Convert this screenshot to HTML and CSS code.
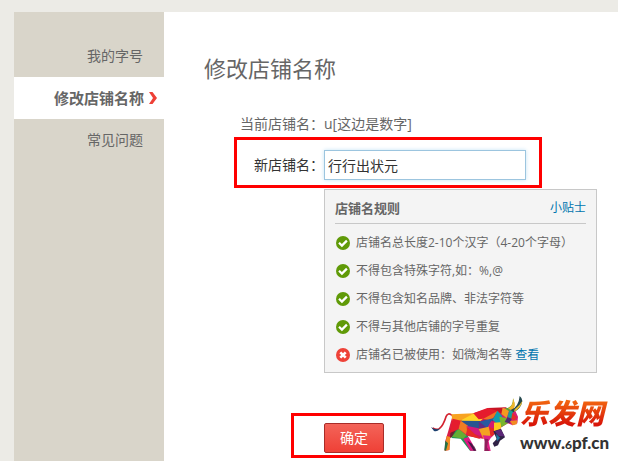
FILE: index.html
```html
<!DOCTYPE html>
<html lang="zh-CN">
<head>
    <meta charset="UTF-8">
    <meta name="viewport" content="width=device-width, initial-scale=1.0">
    <title>修改店铺名称</title>
    <link rel="stylesheet" href="styles.css">
</head>
<body>
    <svg class="sprite" aria-hidden="true">
        <symbol id="ok" viewBox="0 0 14 14">
            <circle cx="7" cy="7" r="7" fill="#609a08"/>
            <path d="M3 6.8l2.9 2.8 5-5" fill="none" stroke="#fff" stroke-width="2.2"/>
        </symbol>
        <symbol id="no" viewBox="0 0 14 14">
            <circle cx="7" cy="7" r="7" fill="#ee4238"/>
            <path d="M4.3 4.3l5.4 5.4M9.7 4.3l-5.4 5.4" fill="none" stroke="#fff" stroke-width="2.6"/>
        </symbol>
    </svg>
    <div class="page">
        <nav class="sidebar">
            <a href="#">我的字号</a>
            <a href="#" class="active">修改店铺名称<svg class="arrow" viewBox="0 0 8 12"><path d="M0 0h3.5L8 6l-4.5 6H0l4-6z" fill="#ee4036"/></svg></a>
            <a href="#">常见问题</a>
        </nav>
        <main class="main">
            <h1>修改店铺名称</h1>
            <form>
                <div class="row">
                    <span class="label">当前店铺名：</span>
                    <span>u[这边是数字]</span>
                </div>
                <div class="row boxed">
                    <label class="label" for="shopName">新店铺名：</label>
                    <input type="text" id="shopName" value="行行出状元">
                </div>
                <section class="tips">
                    <div class="tips-head">
                        <h2>店铺名规则</h2>
                        <a href="#">小贴士</a>
                    </div>
                    <ul>
                        <li><svg class="icon"><use href="#ok"/></svg><span>店铺名总长度2-10个汉字（4-20个字母）</span></li>
                        <li><svg class="icon"><use href="#ok"/></svg><span>不得包含特殊字符,如：%,@</span></li>
                        <li><svg class="icon"><use href="#ok"/></svg><span>不得包含知名品牌、非法字符等</span></li>
                        <li><svg class="icon"><use href="#ok"/></svg><span>不得与其他店铺的字号重复</span></li>
                        <li><svg class="icon"><use href="#no"/></svg><span>店铺名已被使用：如微淘名等 <a href="#">查看</a></span></li>
                    </ul>
                </section>
                <div class="actions">
                    <div class="submit-box">
                        <button type="submit">确定</button>
                    </div>
                    <div class="logo">
                        <svg class="bull" viewBox="12 27 288 171" aria-hidden="true">
                            <!-- tail -->
                            <path d="M78 88Q66 78 60 92Q52 118 40 128Q32 133 20 126" fill="none" stroke="#d3222f" stroke-width="5"/>
                            <path d="M42 126Q32 135 15 123L24 135Q36 138 42 126z" fill="#1d416f"/>
                            <!-- hind legs -->
                            <path d="M78 95L102 108L96 134L72 156L70 192L56 194L58 164L66 138z" fill="#d91e48"/>
                            <path d="M74 128L96 120L84 150L72 156z" fill="#6d2430"/>
                            <path d="M62 150L73 153L70 192L56 194z" fill="#f28c22"/>
                            <path d="M58 164L66 172L60 194L55 193z" fill="#256f45"/>
                            <path d="M98 118L132 136L122 164L146 182L151 194L132 194L104 158L76 156z" fill="#1d9857"/>
                            <path d="M100 126L130 138L112 158L78 152z" fill="#64ae34"/>
                            <path d="M112 158L128 153L151 194H133z" fill="#df1682"/>
                            <path d="M124 164L138 173L150 194H143z" fill="#421a45"/>
                            <!-- body -->
                            <path d="M104 104L142 82L190 66L228 66L240 100L222 130L198 152L170 158L124 150L98 128z" fill="#d51b50"/>
                            <path d="M76 85L144 82L108 105L80 108z" fill="#f8a321"/>
                            <path d="M80 98L106 104L98 130L70 142z" fill="#e51d2e"/>
                            <path d="M108 101L144 82L156 96L176 94L160 108L108 106z" fill="#ffd327"/>
                            <path d="M104 104L164 105L158 129L122 122z" fill="#27558f"/>
                            <path d="M104 104L126 119L120 145L98 128z" fill="#ef7d23"/>
                            <path d="M120 119L158 127L170 152L146 144z" fill="#d31a7b"/>
                            <path d="M122 122L146 144L164 160L124 148z" fill="#e72a25"/>
                            <path d="M158 108L208 92L190 130L160 130z" fill="#612b83"/>
                            <path d="M142 82L184 66L228 72L212 94L158 100z" fill="#e51b2d"/>
                            <path d="M184 66L242 64L228 84L214 74z" fill="#c61424"/>
                            <path d="M172 98L216 74L196 104z" fill="#f07422"/>
                            <path d="M160 107L204 96L184 126z" fill="#275aa0"/>
                            <path d="M214 74L232 94L222 124L200 101z" fill="#119cae"/>
                            <path d="M196 104L224 118L196 146L180 132z" fill="#d51b72"/>
                            <path d="M158 129L188 122L196 150L172 158z" fill="#f4a321"/>
                            <path d="M190 124L214 130L194 157z" fill="#e52a26"/>
                            <path d="M204 110L232 108L218 140L204 142z" fill="#ffcb1e"/>
                            <!-- front legs -->
                            <path d="M170 148L198 150L188 166L194 195H176L181 176z" fill="#df2086"/>
                            <path d="M176 158L187 159L183 184L190 195H175z" fill="#8f215b"/>
                            <path d="M202 136L225 128L237 154L222 164L216 178L205 182L200 172L212 159z" fill="#302146"/>
                            <path d="M206 136L224 130L236 151L218 150z" fill="#5c2779"/>
                            <path d="M210 143L222 155L213 166z" fill="#1b77a0"/>
                            <!-- head -->
                            <path d="M230 65L265 68L276 92L274 112L260 118L246 112L226 124z" fill="#d71c73"/>
                            <path d="M230 65L250 72L242 96L226 84z" fill="#f39b20"/>
                            <path d="M220 92L242 96L248 110L226 124z" fill="#77b42e"/>
                            <path d="M250 72L262 74L258 98L244 94z" fill="#1a9e94"/>
                            <path d="M244 94L258 98L250 112L236 108z" fill="#522b74"/>
                            <path d="M259 80L272 94L264 104L256 98z" fill="#e52d28"/>
                            <path d="M252 105L274 103L272 115L260 118z" fill="#f28b23"/>
                            <!-- horns -->
                            <path d="M236 67Q262 66 261 37Q274 70 248 75z" fill="#55a43a"/>
                            <path d="M246 67Q262 61 261 37Q274 66 256 73z" fill="#f0b52b"/>
                            <path d="M254 72Q278 64 281 30Q288 35 289 45Q285 70 262 79z" fill="#24484d"/>
                            <path d="M266 70Q282 57 289 45Q286 66 264 77z" fill="#e7bb2c"/>
                        </svg>
                        <div class="brand">
                            <span class="brand-name">乐发网</span>
                            <span class="brand-url">www.<small>6</small>pf.cn</span>
                        </div>
                    </div>
                </div>
            </form>
        </main>
    </div>
</body>
</html>
```
FILE: styles.css
```css
:root {
    --text: #666;
    --link: #0074ae;
    --mark: #ff0000;
}

* {
    box-sizing: border-box;
}

body {
    margin: 0;
    padding: 12px 0 0 14px;
    background-color: #ecebe6;
    color: var(--text);
    font-family: "Open Sans", "Noto Sans CJK SC", sans-serif;
    font-size: 14px;
    line-height: 20px;
}

a {
    color: var(--link);
    text-decoration: none;
}

.sprite {
    display: none;
}

.page {
    display: flex;
    min-height: calc(100vh - 12px);
}

.sidebar {
    flex: 0 0 150px;
    padding-top: 23px;
    background-color: #d9d5ca;
}

.sidebar a {
    display: flex;
    justify-content: flex-end;
    align-items: center;
    height: 42px;
    padding-right: 21px;
    color: var(--text);
}

.sidebar .active {
    padding-right: 7px;
    background-color: #fff;
    font-size: 15px;
    font-weight: bold;
}

.arrow {
    width: 8px;
    height: 12px;
    margin-left: 5px;
}

.main {
    flex: 1;
    min-width: 0;
    background-color: #fff;
}

h1 {
    margin: 40px 0 0 40px;
    font-size: 22px;
    font-weight: normal;
    line-height: 32px;
}

form {
    padding: 30px 0 0 70px;
}

.row {
    display: flex;
    align-items: center;
    padding-left: 3px;
}

.label {
    flex: 0 0 87px;
    text-align: right;
    white-space: nowrap;
}

.boxed {
    width: 308px;
    margin-top: 3px;
    padding: 10px 0 5px;
    border: 3px solid var(--mark);
    color: #333;
}

input {
    width: 202px;
    height: 30px;
    padding: 0 3px;
    border: 1px solid #9cc5df;
    box-shadow: 0 0 4px #c5e3f5;
    color: #333;
    font: inherit;
    outline: none;
}

.tips {
    width: 273px;
    height: 184px;
    margin: 1px 0 0 90px;
    padding: 8px 10px;
    border: 1px solid #c8c8c8;
    background-color: #f4f4f4;
    font-size: 12px;
}

.tips-head {
    display: flex;
    justify-content: space-between;
    padding-bottom: 5px;
    border-bottom: 1px solid #c8c8c8;
}

h2 {
    margin: 0;
    font-size: 13px;
    line-height: 20px;
}

ul {
    margin: 5px 0 0;
    padding: 0;
    list-style: none;
}

li {
    display: flex;
    align-items: center;
    height: 28px;
    white-space: nowrap;
}

.icon {
    width: 14px;
    height: 14px;
    margin: 0 6px 0 1px;
}

.actions {
    display: flex;
    align-items: flex-start;
    justify-content: space-between;
    margin-top: 18px;
    padding: 0 10px 0 57px;
}

.submit-box {
    width: 115px;
    height: 45px;
    margin-top: 22px;
    padding: 7px 0 0 30px;
    border: 3px solid var(--mark);
}

button {
    width: 60px;
    height: 30px;
    padding: 0;
    border: 1px solid #a92c28;
    border-radius: 2px;
    background: linear-gradient(#f36459, #ef4036);
    color: #fff;
    font: inherit;
    cursor: pointer;
}

.logo {
    display: flex;
    align-items: center;
}

.bull {
    width: 96px;
    height: 57px;
    margin-right: -6px;
}

.brand {
    display: flex;
    flex-direction: column;
    width: 88px;
    white-space: nowrap;
}

.brand-name {
    background: linear-gradient(#f36a10 20%, #d81509 80%);
    background-clip: text;
    -webkit-background-clip: text;
    color: transparent;
    font-family: "Noto Sans CJK SC", sans-serif;
    font-size: 28px;
    font-style: italic;
    font-weight: 900;
    line-height: 42px;
}

.brand-url {
    color: #333;
    font-family: Lato, sans-serif;
    font-size: 17px;
    font-weight: 900;
    line-height: 20px;
}

.brand-url small {
    font-size: 12px;
}
```
